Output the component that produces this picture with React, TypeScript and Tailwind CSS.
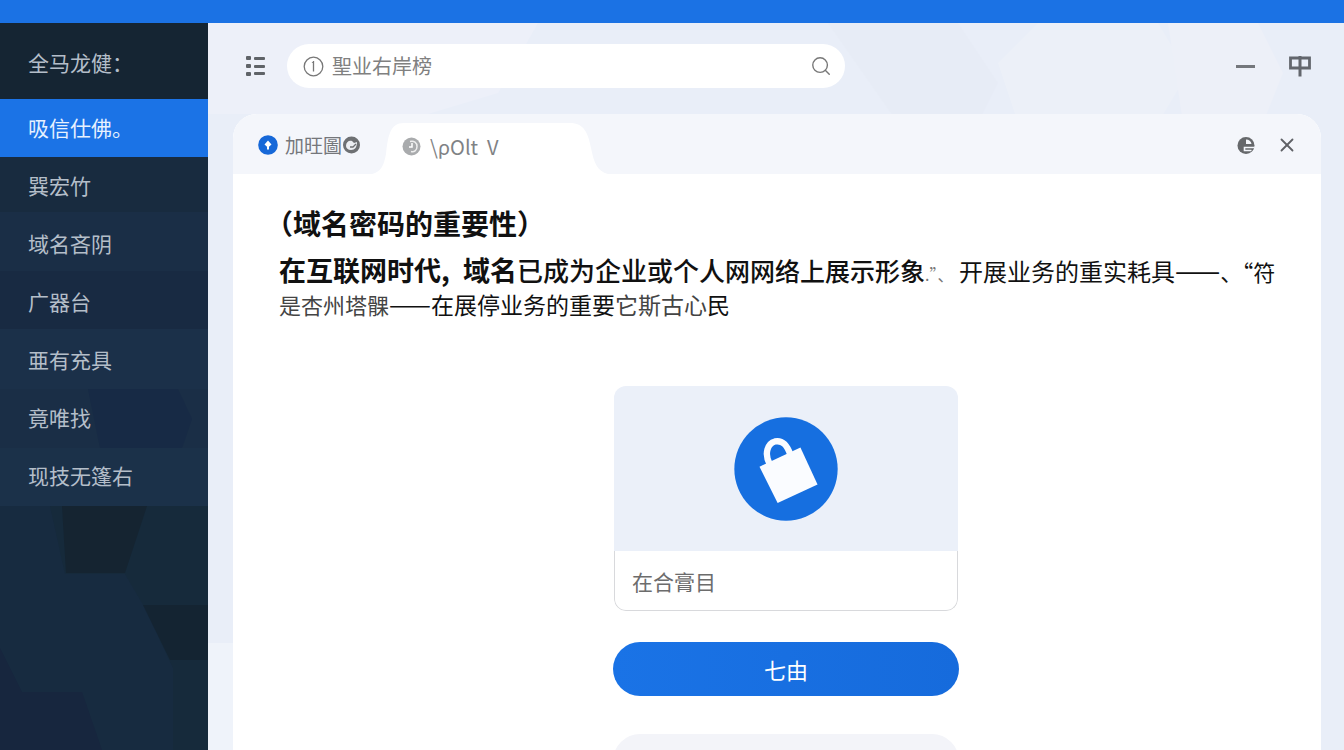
import { Search, X } from "lucide-react";

const menu = [
  "吸信仕佛。",
  "巽宏竹",
  "域名吝阴",
  "广器台",
  "亜有充具",
  "竟唯找",
  "现技无篷右",
];

const SidebarFacets = () => (
  <svg
    className="absolute inset-0 h-full w-full"
    viewBox="0 0 208 727"
    preserveAspectRatio="none"
    aria-hidden="true"
  >
    <rect y="133" width="208" height="350" fill="#1a2e46" />
    <path d="M0 133h208v56H0z" fill="#182b3f" />
    <path d="M0 248h208v58H0z" fill="#182a42" />
    <path d="M0 306h208v60H0z" fill="#1b3049" />
    <path d="M88 366h90l14 30-10 29H100z" fill="#172a45" />
    <path d="M0 425h208v58H0z" fill="#1b3149" />
    <path d="M0 483h208v244H0z" fill="#162a3b" />
    <path d="M0 483h50l15 68h60l20 34 28 60v82H0z" fill="#172b40" />
    <path d="M62 483h85l-22 67H66z" fill="#152431" />
    <path d="M143 582h65v55h-38z" fill="#142432" />
    <path d="M0 625l22 44h60l20 58H0z" fill="#17263e" />
  </svg>
);

const PageFacets = () => (
  <svg
    className="absolute inset-0 h-full w-full"
    viewBox="0 0 1136 727"
    preserveAspectRatio="none"
    aria-hidden="true"
  >
    <path d="M0 0h330l-40 70-70 21H0z" fill="#edf0f9" />
    <path d="M620 0h130l40 60-20 40H690z" fill="#e7ecf6" />
    <path d="M790 40l40-40h120l30 50-30 50H810z" fill="#ecf0f8" />
    <path d="M960 0h90l25 50-20 50h-80z" fill="#edf0f8" />
    <path d="M0 620h25v107H0z" fill="#eff3fa" />
  </svg>
);

const ListIcon = () => (
  <svg width="19" height="20" viewBox="0 0 19 20" fill="#5f6368">
    <rect width="5" height="4" rx="1" />
    <rect y="8" width="5" height="4" rx="1" />
    <rect y="16" width="5" height="4" rx="1" />
    <rect x="8" y="1" width="11" height="3" rx="1" />
    <rect x="8" y="9" width="11" height="3" rx="1" />
    <rect x="8" y="16" width="11" height="3" rx="1" />
  </svg>
);

const InfoIcon = () => (
  <svg width="21" height="21" viewBox="0 0 21 21" fill="none" stroke="#777" strokeWidth="1.3">
    <circle cx="10.500" cy="10.500" r="9.300" />
    <path d="M10.500 5v10.500M9 6.500l1.500-1" />
  </svg>
);

const DockIcon = () => (
  <svg width="22" height="22" viewBox="0 0 22 22" fill="none" stroke="#63666d">
    <path d="M1.500 3h19v10h-19z" strokeWidth="2.800" />
    <path d="M11 1v20.500" strokeWidth="3" />
  </svg>
);

const PinIcon = () => (
  <svg width="20" height="20" viewBox="0 0 20 20">
    <circle cx="10" cy="10" r="9.800" fill="#1668d8" />
    <path d="M10 5.500l3.500 4-2.500 2.200V14.500H9v-2.800L6.500 9.500z" fill="#fff" />
  </svg>
);

const SwirlIcon = () => (
  <svg width="19" height="18" viewBox="0 0 19 18">
    <circle cx="9.500" cy="9" r="8.500" fill="#6e7073" />
    <path d="M4 10c0-4 3-6 6-5l2 2 3-1c0 5-2 8-6 8-3 0-5-2-5-4z" fill="#eceef2" />
    <path d="M8 11l3 0 3-3" fill="none" stroke="#6e7073" strokeWidth="1.300" />
  </svg>
);

const ClockIcon = () => (
  <svg width="19" height="19" viewBox="0 0 19 19">
    <circle cx="9.500" cy="9.500" r="9" fill="#a9abad" />
    <path d="M8 4.500c4-1 7 1 7 5s-3 6-6 5" fill="none" stroke="#eee" strokeWidth="1.500" />
    <path d="M10 6v4H7" fill="none" stroke="#fff" strokeWidth="1.500" />
  </svg>
);

const GlobeIcon = () => (
  <svg width="18" height="19" viewBox="0 0 18 19">
    <circle cx="9" cy="9.500" r="8.500" fill="#66686b" />
    <path d="M9 3.500c3 0 5 1.500 5.500 4.500H9z" fill="#f4f6fb" />
    <path d="M17.500 11.500H7.500v3h7" fill="none" stroke="#f4f6fb" strokeWidth="1.600" />
  </svg>
);

const TabShape = () => (
  <svg
    className="absolute inset-0 h-full w-full"
    viewBox="0 0 236 51"
    preserveAspectRatio="none"
    aria-hidden="true"
  >
    <path d="M0 51C9 49 12 42 14 31C16 13 18 0 32 0H198C212 0 216 10 219 25C222 40 225 48 236 51Z" fill="#fff" />
  </svg>
);

const BagIcon = () => (
  <svg width="104" height="104" viewBox="0 0 310 310">
    <circle cx="155" cy="155" r="154" fill="#166fe0" />
    <path d="M76 148L198 91L249 201L130 256Z" fill="#fafcff" />
    <path
      d="M107 142C88 108 102 78 122 73C146 68 158 84 168 112"
      fill="none"
      stroke="#fafcff"
      strokeWidth="19"
    />
  </svg>
);

const Sidebar = () => (
  <aside className="relative w-[208px] shrink-0 bg-[#152533] text-[21px] text-[#b4bec9]">
    <SidebarFacets />
    <div className="relative">
      <p className="flex h-[76px] items-center pl-7 pt-1">全马龙健：</p>
      <nav>
        {menu.map((label, i) => (
          <a
            key={label}
            href="#"
            className={
              i === 0
                ? "flex h-[58px] items-center bg-[#1b73e6] pl-7 text-[#e6f1ff]"
                : "flex h-[58px] items-center pl-7"
            }
          >
            {label}
          </a>
        ))}
      </nav>
    </div>
  </aside>
);

const Toolbar = () => (
  <header className="flex items-center pb-[26px] pl-[38px] pr-[33px] pt-[21px]">
    <button aria-label="菜单">
      <ListIcon />
    </button>
    <label className="ml-[22px] flex h-11 w-full max-w-[558px] items-center gap-2 rounded-full bg-white pl-4 pr-[13px]">
      <InfoIcon />
      <input
        type="text"
        aria-label="搜索"
        placeholder="聖业右岸榜"
        className="min-w-0 flex-1 text-[20px] text-[#777] outline-none placeholder:text-[#808080]"
      />
      <Search size={22} strokeWidth={1.5} color="#777" />
    </label>
    <div className="ml-auto flex items-center gap-[34px]">
      <button aria-label="最小化" className="flex h-6 items-center">
        <span className="h-[3px] w-[19px] bg-[#74777c]" />
      </button>
      <button aria-label="停靠">
        <DockIcon />
      </button>
    </div>
  </header>
);

const TabStrip = () => (
  <div className="flex h-[60px] items-end rounded-t-[24px] bg-[#f4f6fb] pr-[23px]">
    <button className="flex h-[60px] w-[139px] shrink-0 items-center gap-[7px] pl-[25px] pt-[2px] text-[19px] text-[#75777b]">
      <PinIcon />
      <span className="flex items-center whitespace-nowrap">
        加旺圖
        <SwirlIcon />
      </span>
    </button>
    <button className="relative h-[51px] w-[236px] text-[20px] text-[#808285]">
      <TabShape />
      <span className="relative flex items-center gap-[9px] pb-1 pl-[30px]">
        <ClockIcon />
        <span className="whitespace-pre">\ρOlt  V</span>
      </span>
    </button>
    <div className="ml-auto flex h-[60px] items-center gap-[21px] pt-[2px]">
      <button aria-label="浏览器">
        <GlobeIcon />
      </button>
      <button aria-label="关闭">
        <X size={22} strokeWidth={2} color="#5f6166" />
      </button>
    </div>
  </div>
);

const Article = () => (
  <div className="text-[#111]">
    <h1 className="text-[28px] font-bold leading-[40px] [text-spacing-trim:trim-start]">
      （域名密码的重要性）
    </h1>
    <p className="mt-3 text-[23px] leading-[33px]">
      <b className="text-[27px] leading-none">
        在互联网时代<span className="inline-block w-[22px] leading-none">,</span>域名
      </b>
      <span className="text-[26px] font-medium leading-none">已成为企业或个人</span>
      <span className="text-[25px] font-medium leading-none">网网络上展示形象</span>
      <span className="inline-block w-[34px] text-[16px] leading-none text-[#777]">.”、</span>
      <span className="text-[24px] leading-none">开展业务的重实耗具</span>
      <span className="text-[27px] leading-none">——</span>
      <span className="text-[22px] leading-none">、“符</span>
      <br />
      <span className="text-[22px] leading-none text-[#444]">是杏州塔髁</span>
      <span className="text-[25px] leading-none">——</span>
      在展停业务的重要
      <span className="text-[#444]">它斯古心</span>民
    </p>
  </div>
);

const App = () => {
  return (
    <div className="flex h-screen flex-col overflow-hidden bg-[#e9eef8] font-['Noto_Sans_CJK_SC',sans-serif]">
      <div className="h-[23px] shrink-0 bg-[#1b72e4]" />
      <div className="flex min-h-0 flex-1">
        <Sidebar />
        <div className="relative min-w-0 flex-1">
          <PageFacets />
          <div className="relative flex h-full flex-col">
            <Toolbar />
            <main className="ml-[25px] mr-[23px] min-h-0 flex-1 overflow-hidden rounded-t-[24px] bg-white">
              <TabStrip />
              <div className="pl-[46px] pr-[28px] pt-[29px]">
                <Article />
                <form className="mt-[65px] flex flex-col items-center">
                  <div className="w-full max-w-[344px] overflow-hidden rounded-xl">
                    <div className="flex h-[165px] items-center justify-center bg-[#ebf0f9]">
                      <BagIcon />
                    </div>
                    <input
                      type="text"
                      aria-label="在合膏目"
                      placeholder="在合膏目"
                      className="block h-[60px] w-full rounded-b-xl border border-t-0 border-[#d8d9dc] px-[17px] text-[21px] outline-none placeholder:text-[#6c6c6c]"
                    />
                  </div>
                  <button
                    type="button"
                    className="mt-[31px] h-[54px] w-full max-w-[346px] rounded-full bg-linear-to-r from-[#1a73e6] to-[#166bdc] text-[22px] text-white"
                  >
                    七由
                  </button>
                  <button
                    type="button"
                    className="mt-[38px] h-[54px] w-full max-w-[346px] rounded-full bg-[#f3f4f9] text-[22px] text-white"
                  >
                    公证
                  </button>
                </form>
              </div>
            </main>
          </div>
        </div>
      </div>
    </div>
  );
};

export default App;
